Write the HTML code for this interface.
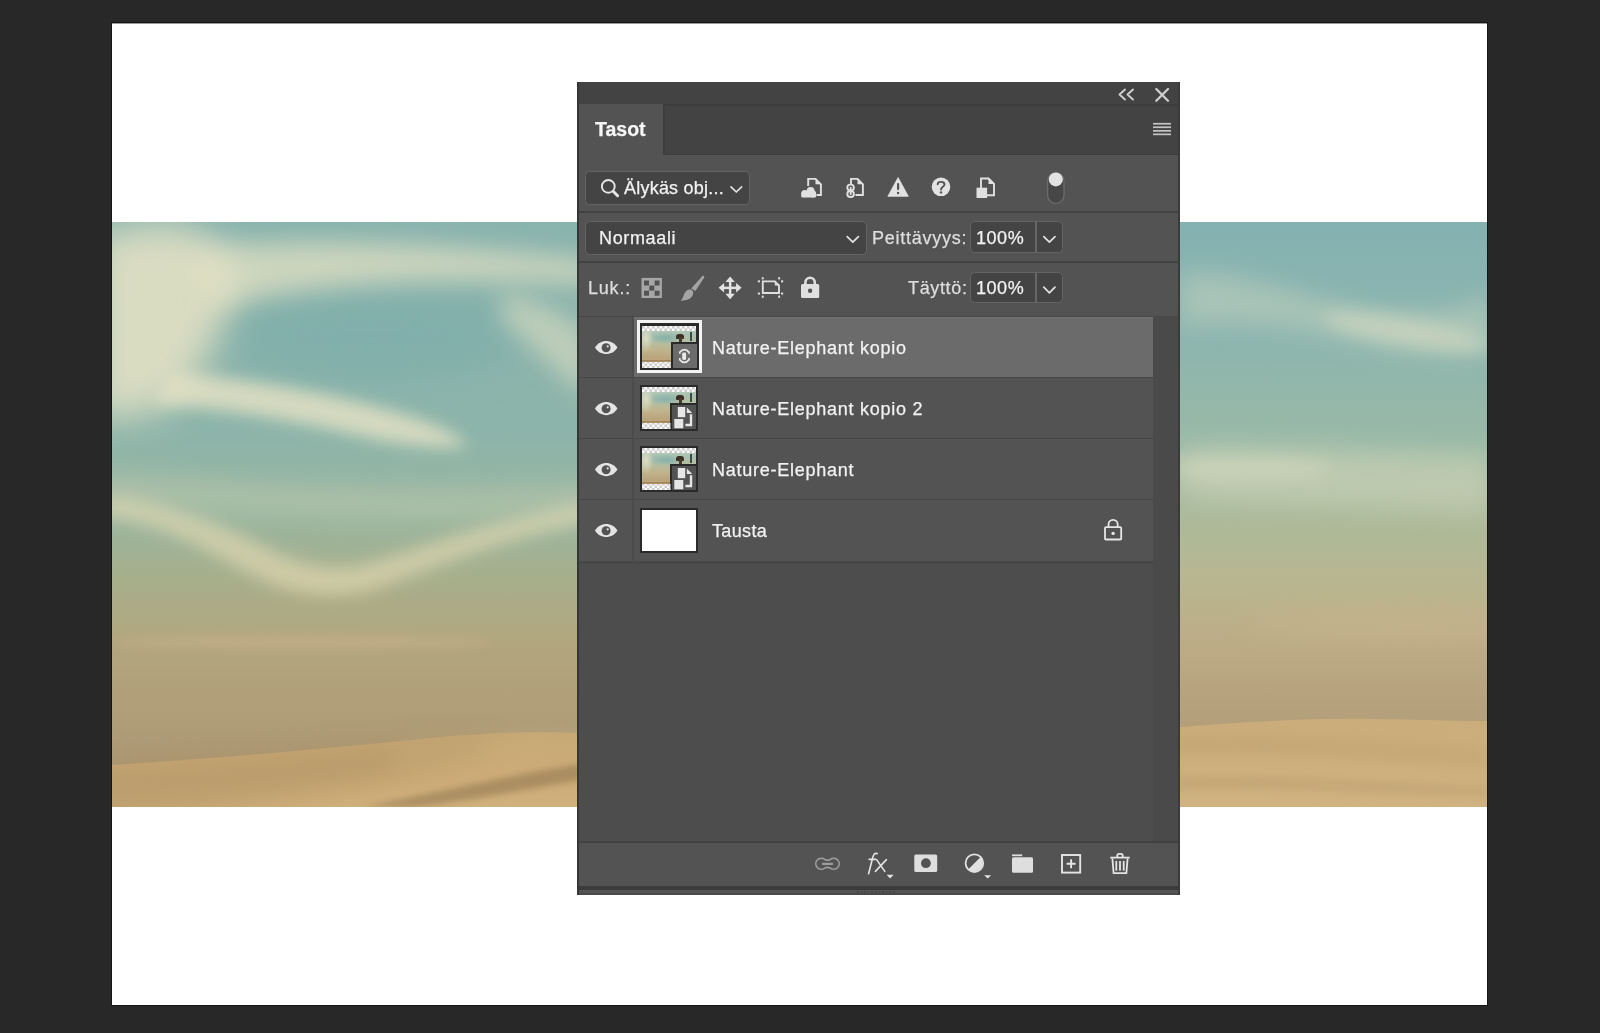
<!DOCTYPE html>
<html><head><meta charset="utf-8">
<style>
*{margin:0;padding:0;box-sizing:border-box}
html,body{width:1600px;height:1033px;overflow:hidden;background:#282828;font-family:"Liberation Sans",sans-serif}
.a{position:absolute}
#canvas{position:absolute;left:111px;top:22px;width:1377px;height:984px;background:#fff;border:1px solid #161616;box-shadow:inset 0 1px 0 #9a9a9a}
#photo{position:absolute;left:112px;top:222px;width:1375px;height:585px;overflow:hidden;background:#a9b49c}
#panel{position:absolute;left:577px;top:82px;width:603px;height:813px;background:#535353;overflow:hidden}
.t{position:absolute;color:#f2f2f2;white-space:nowrap;font-size:18px;line-height:18px;-webkit-text-stroke:0.25px currentColor;will-change:transform}
.fld{position:absolute;background:#444444;border:1.6px solid #646464;border-radius:4.5px}
.sep{position:absolute;left:0;width:603px;height:2px;background:#424242}
svg{position:absolute;overflow:visible}

.th{position:absolute;left:640px;width:58px;height:46px;background:#2a2a2a}
.im{position:absolute;left:2px;top:2px;width:54px;height:42px;overflow:hidden;
 background:
  linear-gradient(180deg,rgba(0,0,0,0) 0,rgba(0,0,0,0) 34px,rgba(120,95,60,.55) 34px,rgba(150,120,80,.35) 36px,rgba(0,0,0,0) 36px),
  radial-gradient(ellipse 8px 14px at 4px 12px,rgba(226,224,196,.9) 0%,rgba(226,224,196,0) 100%),
  radial-gradient(ellipse 20px 6px at 24px 12px,#86b0aa 0%,rgba(134,176,170,0) 100%),
  linear-gradient(180deg,#c4d0bc 0px,#a9c2b2 8px,#b4bfa2 16px,#c0b48c 24px,#b9a47c 32px,#c8a878 36px,#d2b78c 42px)}
.ck{position:absolute;left:0;width:54px;height:5px;background:conic-gradient(#cfcfcf 25%,#fff 0 50%,#cfcfcf 0 75%,#fff 0) 0 0/5px 5px}
.bd{position:absolute;left:30px;top:18px;width:28px;height:28px;background:#2a2a2a}
.bdi{position:absolute;left:2px;top:2px;width:24px;height:24px}
</style></head><body>
<div id="canvas"></div>
<div id="photo"><svg width="1375" height="585" viewBox="0 0 1375 585" style="left:0;top:0">
<defs>
 <linearGradient id="sky" x1="0" y1="0" x2="0" y2="1">
  <stop offset="0" stop-color="#89b3ae"/>
  <stop offset="0.36" stop-color="#8db4aa"/>
  <stop offset="0.5" stop-color="#98b5a0"/>
  <stop offset="0.62" stop-color="#a8ae8a"/>
  <stop offset="0.72" stop-color="#b2a67e"/>
  <stop offset="0.8" stop-color="#b1a07a"/>
  <stop offset="0.9" stop-color="#ad9a76"/>
  <stop offset="1" stop-color="#ab9875"/>
 </linearGradient>
 <linearGradient id="skyR" x1="0" y1="0" x2="0" y2="1">
  <stop offset="0" stop-color="#84b1b1"/>
  <stop offset="0.2" stop-color="#8cb5af"/>
  <stop offset="0.38" stop-color="#9ab9a6"/>
  <stop offset="0.5" stop-color="#abba9b"/>
  <stop offset="0.62" stop-color="#b9b68f"/>
  <stop offset="0.74" stop-color="#bcaa84"/>
  <stop offset="0.84" stop-color="#b4a07b"/>
  <stop offset="1" stop-color="#b19c78"/>
 </linearGradient>
 <linearGradient id="sand" x1="0" y1="0" x2="0" y2="1">
  <stop offset="0" stop-color="#c4a673"/>
  <stop offset="0.5" stop-color="#ccab77"/>
  <stop offset="1" stop-color="#d0b07c"/>
 </linearGradient>
 <filter id="b5" x="-50%" y="-50%" width="200%" height="200%"><feGaussianBlur stdDeviation="5"/></filter>
 <filter id="b8" x="-50%" y="-50%" width="200%" height="200%"><feGaussianBlur stdDeviation="8"/></filter>
 <filter id="b12" x="-50%" y="-50%" width="200%" height="200%"><feGaussianBlur stdDeviation="12"/></filter>
 <filter id="b18" x="-50%" y="-50%" width="200%" height="200%"><feGaussianBlur stdDeviation="18"/></filter>
 <filter id="b3" x="-50%" y="-50%" width="200%" height="200%"><feGaussianBlur stdDeviation="3"/></filter>
</defs>
<rect x="0" y="0" width="700" height="585" fill="url(#sky)"/>
<rect x="700" y="0" width="675" height="585" fill="url(#skyR)"/>
<!-- left: teal hole darker -->
<ellipse cx="260" cy="112" rx="150" ry="48" fill="#7dadab" opacity="0.6" filter="url(#b18)"/>
<!-- left clouds -->
<g fill="#e7e3c5">
 <path d="M-20,10 L60,0 C130,20 130,60 110,100 C95,140 80,170 40,190 L-20,200 Z" opacity="0.85" filter="url(#b18)"/>
 <path d="M80,28 C180,12 330,22 480,38 L480,62 C340,54 200,60 95,88 Z" opacity="0.7" filter="url(#b12)"/>
 <path d="M390,70 C430,80 470,100 480,120 L480,175 C450,160 420,120 390,100 Z" opacity="0.55" filter="url(#b12)"/>
 <path d="M60,150 C150,158 240,175 300,195 C330,205 350,215 355,224 C330,228 280,222 240,212 C170,196 100,185 40,182 Z" opacity="0.8" filter="url(#b8)"/>
 <path d="M-10,270 C40,276 90,293 140,318 C180,340 210,350 250,343 C300,330 360,303 480,278 L480,300 C370,322 310,352 260,368 C210,380 170,370 130,348 C80,320 40,300 -10,296 Z" fill="#e3d9b2" opacity="0.65" filter="url(#b8)"/>
 <path d="M-10,250 C120,262 300,275 480,262 L480,290 C300,305 120,290 -10,280 Z" fill="#cfd0b0" opacity="0.4" filter="url(#b12)"/>
</g>
<ellipse cx="190" cy="420" rx="190" ry="7" fill="#c9b08d" opacity="0.55" filter="url(#b5)"/>
<!-- right clouds -->
<g fill="#e3e1c5">
 <path d="M1068,50 C1110,48 1150,60 1200,74 C1240,86 1280,94 1320,90 C1350,87 1370,80 1380,70 L1380,128 C1340,134 1290,130 1240,118 C1180,104 1120,98 1068,104 Z" opacity="0.35" filter="url(#b12)"/>
 <ellipse cx="1295" cy="110" rx="85" ry="14" transform="rotate(10 1295 110)" opacity="0.45" filter="url(#b8)"/>
 <path d="M1068,226 C1150,222 1260,230 1380,232 L1380,290 C1260,284 1150,284 1068,276 Z" opacity="0.4" filter="url(#b12)"/>
 <ellipse cx="1130" cy="246" rx="90" ry="12" opacity="0.35" filter="url(#b8)"/>
</g>
<ellipse cx="1300" cy="402" rx="170" ry="15" fill="#d1b690" opacity="0.4" filter="url(#b12)"/>
<!-- sand left -->
<path d="M0,543 C100,537 220,526 339,514 C400,509 440,510 470,511 L470,585 L0,585 Z" fill="url(#sand)"/>
<path d="M-20,540 C120,534 220,526 340,516 L400,520 C300,560 150,585 -20,600 Z" fill="#a88b60" opacity="0.45" filter="url(#b12)"/>
<path d="M280,526 C360,516 420,514 480,514 L480,532 C420,534 360,538 280,546 Z" fill="#d6bb8a" opacity="0.3" filter="url(#b12)"/>
<path d="M250,585 C330,570 400,552 470,542 L470,558 C410,568 350,580 300,585 Z" fill="#8f7450" opacity="0.55" filter="url(#b3)"/>
<!-- sand right -->
<linearGradient id="sandR" x1="0" y1="0" x2="0" y2="1"><stop offset="0" stop-color="#cbad7b"/><stop offset="1" stop-color="#d1b382"/></linearGradient>
<path d="M1060,506 C1130,500 1200,496 1260,497 C1320,498 1350,499 1375,499 L1375,585 L1060,585 Z" fill="url(#sandR)"/>
<path d="M1060,515 C1150,512 1260,518 1375,528 L1375,545 C1260,535 1150,530 1060,532 Z" fill="#b09366" opacity="0.3" filter="url(#b8)"/>
<path d="M1060,555 C1150,552 1260,558 1375,565 L1375,575 C1260,570 1150,566 1060,568 Z" fill="#ad9064" opacity="0.3" filter="url(#b5)"/>
</svg></div>
<div id="panel">
  <!-- title bar + tab row -->
  <div class="a" style="left:0;top:0;width:603px;height:73px;background:#434343"></div>
  <div class="a" style="left:1px;top:22px;width:85px;height:51px;background:#535353"></div>
  <div class="a" style="left:86px;top:22px;width:517px;height:1.5px;background:#3d3d3d"></div>
  <div class="a" style="left:86px;top:22px;width:1.5px;height:51px;background:#3d3d3d"></div>
  <div class="a" style="left:86px;top:71.5px;width:517px;height:1.5px;background:#3e3e3e"></div>
  <div class="t" style="left:18px;top:37.5px;font-size:19.5px;line-height:19.5px;font-weight:bold;color:#f6f6f6">Tasot</div>
  <!-- filter row -->
  <div class="fld" style="left:7.5px;top:88.5px;width:165px;height:34px"></div>
  <div class="t" style="left:47px;top:97px;letter-spacing:0.22px">Älykäs obj...</div>
  <div class="sep" style="top:129px"></div>
  <!-- blend row -->
  <div class="fld" style="left:7.5px;top:138.5px;width:282px;height:34px"></div>
  <div class="t" style="left:22px;top:147px;letter-spacing:0.65px">Normaali</div>
  <div class="t" style="left:294.5px;top:147px;letter-spacing:0.75px;color:#dedede">Peittävyys:</div>
  <div class="fld" style="left:392.5px;top:138.8px;width:93.8px;height:32.4px"></div>
  <div class="a" style="left:458px;top:140px;width:2px;height:30px;background:#666"></div>
  <div class="t" style="left:399px;top:147px;letter-spacing:0.55px">100%</div>
  <div class="sep" style="top:179px"></div>
  <!-- lock row -->
  <div class="t" style="left:11px;top:197px;letter-spacing:0.8px;color:#dedede">Luk.:</div>
  <div class="t" style="left:330.5px;top:197px;letter-spacing:0.65px;color:#dedede">Täyttö:</div>
  <div class="fld" style="left:392.5px;top:189.6px;width:93.8px;height:31px"></div>
  <div class="a" style="left:458px;top:191px;width:2px;height:29px;background:#666"></div>
  <div class="t" style="left:399px;top:197px;letter-spacing:0.55px">100%</div>
  <!-- layers list -->
  <div class="a" style="left:0;top:234px;width:603px;height:525px;background:#4d4d4d"></div>
  <div class="a" style="left:576px;top:234px;width:27px;height:525px;background:#4a4a4a"></div>
  <div class="a" style="left:0;top:234px;width:576px;height:248px;background:#474747"></div>
  <div class="a" style="left:1px;top:235px;width:575px;height:60px;background:#535353"></div>
  <div class="a" style="left:56.5px;top:235px;width:519.5px;height:60px;background:#6b6b6b"></div>
  <div class="a" style="left:56.5px;top:235px;width:519.5px;height:1px;background:#737373"></div>
  <div class="a" style="left:1px;top:296px;width:575px;height:60px;background:#535353"></div>
  <div class="a" style="left:1px;top:357px;width:575px;height:60px;background:#535353"></div>
  <div class="a" style="left:1px;top:418px;width:575px;height:61px;background:#535353"></div>
  <div class="a" style="left:55px;top:235px;width:1.5px;height:245px;background:#4b4b4b"></div>
  <div class="t" style="left:135px;top:257px;letter-spacing:0.75px">Nature-Elephant kopio</div>
  <div class="t" style="left:135px;top:318px;letter-spacing:0.75px">Nature-Elephant kopio 2</div>
  <div class="t" style="left:135px;top:379px;letter-spacing:0.75px">Nature-Elephant</div>
  <div class="t" style="left:135px;top:440px;letter-spacing:0.35px">Tausta</div>
  <!-- footer -->
  <div class="sep" style="top:759px"></div>
  <div class="a" style="left:0;top:804px;width:603px;height:4px;background:#3b3b3b"></div>
  <div class="a" style="left:0;top:811px;width:603px;height:2px;background:#4a4a4a"></div>
  <div class="a" style="left:280.0px;top:808.5px;width:1.6px;height:4px;background:#484848"></div><div class="a" style="left:283.6px;top:808.5px;width:1.6px;height:4px;background:#484848"></div><div class="a" style="left:287.2px;top:808.5px;width:1.6px;height:4px;background:#484848"></div><div class="a" style="left:290.8px;top:808.5px;width:1.6px;height:4px;background:#484848"></div><div class="a" style="left:294.4px;top:808.5px;width:1.6px;height:4px;background:#484848"></div><div class="a" style="left:298.0px;top:808.5px;width:1.6px;height:4px;background:#484848"></div><div class="a" style="left:301.6px;top:808.5px;width:1.6px;height:4px;background:#484848"></div><div class="a" style="left:305.2px;top:808.5px;width:1.6px;height:4px;background:#484848"></div><div class="a" style="left:308.8px;top:808.5px;width:1.6px;height:4px;background:#484848"></div><div class="a" style="left:312.4px;top:808.5px;width:1.6px;height:4px;background:#484848"></div><div class="a" style="left:316.0px;top:808.5px;width:1.6px;height:4px;background:#484848"></div>
  <!-- panel borders -->
  <div class="a" style="left:0;top:0;width:2px;height:813px;background:#363636"></div>
  <div class="a" style="left:601px;top:0;width:2px;height:813px;background:#3b3b3b"></div>
</div>

<div class="a" style="left:637px;top:320px;width:65px;height:53px;background:#f4f4f4"></div><div class="th" style="top:323px;height:47px;left:639.5px;width:59.5px;"><div class="im" style="left:2.5px;top:3px;">
<div class="a" style="left:34px;top:8px;width:8px;height:5px;background:#3a2e22;border-radius:3px 3px 1px 1px"></div><div class="a" style="left:37px;top:11px;width:3px;height:5px;background:#4a3a2a"></div><div class="a" style="left:48px;top:6px;width:2px;height:9px;background:#3c4a48"></div></div>
<div class="bd" style="left:31px;top:19px;"><div class="bdi" style="background:#6b6b6b"></div></div></div><div class="th" style="top:385px;height:46px;"><div class="im" style="">
<div class="a" style="left:34px;top:8px;width:8px;height:5px;background:#3a2e22;border-radius:3px 3px 1px 1px"></div><div class="a" style="left:37px;top:11px;width:3px;height:5px;background:#4a3a2a"></div><div class="a" style="left:48px;top:6px;width:2px;height:9px;background:#3c4a48"></div></div>
<div class="bd" style=""><div class="bdi" style="background:#535353"></div></div></div><div class="th" style="top:446px;height:46px;"><div class="im" style="">
<div class="a" style="left:34px;top:8px;width:8px;height:5px;background:#3a2e22;border-radius:3px 3px 1px 1px"></div><div class="a" style="left:37px;top:11px;width:3px;height:5px;background:#4a3a2a"></div><div class="a" style="left:48px;top:6px;width:2px;height:9px;background:#3c4a48"></div></div>
<div class="bd" style=""><div class="bdi" style="background:#535353"></div></div></div><div class="th" style="top:507.5px;height:45px"><div class="a" style="left:2px;top:2px;width:54px;height:41px;background:#fff"></div></div>
<svg width="1600" height="1033" viewBox="0 0 1600 1033" style="left:0;top:0">
<defs><pattern id="ckp0" width="5" height="5" patternUnits="userSpaceOnUse" x="642" y="326"><rect width="5" height="5" fill="#fafafa"/><rect width="2.5" height="2.5" fill="#cdcdcd"/><rect x="2.5" y="2.5" width="2.5" height="2.5" fill="#cdcdcd"/></pattern><pattern id="ckp1" width="5" height="5" patternUnits="userSpaceOnUse" x="642" y="387"><rect width="5" height="5" fill="#fafafa"/><rect width="2.5" height="2.5" fill="#cdcdcd"/><rect x="2.5" y="2.5" width="2.5" height="2.5" fill="#cdcdcd"/></pattern><pattern id="ckp2" width="5" height="5" patternUnits="userSpaceOnUse" x="642" y="448"><rect width="5" height="5" fill="#fafafa"/><rect width="2.5" height="2.5" fill="#cdcdcd"/><rect x="2.5" y="2.5" width="2.5" height="2.5" fill="#cdcdcd"/></pattern></defs>
<rect x="642" y="326" width="54" height="5" fill="url(#ckp0)"/><rect x="642" y="362" width="28.5" height="6" fill="url(#ckp0)"/><rect x="642" y="387" width="54" height="5" fill="url(#ckp1)"/><rect x="642" y="423" width="28.5" height="6" fill="url(#ckp1)"/><rect x="642" y="448" width="54" height="5" fill="url(#ckp2)"/><rect x="642" y="484" width="28.5" height="6" fill="url(#ckp2)"/>

 <g fill="none" stroke="#cfcfcf" stroke-width="1.9" stroke-linecap="round" stroke-linejoin="round">
  <!-- << -->
  <path d="M1125,89.5 L1119.5,94.5 L1125,99.5 M1133,89.5 L1127.5,94.5 L1133,99.5"/>
  <!-- x -->
  <path d="M1156.3,89 L1168,100.7 M1168,89 L1156.3,100.7" stroke-width="2.3"/>
 </g>
 <!-- hamburger -->
 <g fill="#c4c4c4">
  <rect x="1153" y="122.9" width="18" height="1.7"/>
  <rect x="1153" y="126.4" width="18" height="1.7"/>
  <rect x="1153" y="130" width="18" height="1.7"/>
  <rect x="1153" y="133.5" width="18" height="1.7"/>
 </g>
 <!-- magnifier -->
 <g fill="none" stroke="#e6e6e6" stroke-linecap="round">
  <circle cx="608.3" cy="186.4" r="6.4" stroke-width="1.9"/>
  <path d="M613.2,191.3 L617.6,195.7" stroke-width="3"/>
 </g>
 <!-- chevrons -->
 <g fill="none" stroke="#e2e2e2" stroke-width="1.7" stroke-linecap="round" stroke-linejoin="round">
  <path d="M731,186.8 L736.3,192 L741.6,186.8"/>
  <path d="M847.2,236.6 L852.8,242.2 L858.4,236.6"/>
  <path d="M1043.8,236.6 L1049.4,242.2 L1055,236.6"/>
  <path d="M1043.8,287.2 L1049.4,292.8 L1055,287.2"/>
 </g>
 <!-- cloud doc -->
 <g fill="none" stroke="#e0e0e0" stroke-width="1.9" stroke-linejoin="miter">
  <path d="M808.2,186 V178.9 H815.5 L820.9,184.3 V195 H816.5"/>
 </g>
 <path d="M815.5,178 V184.3 H821.5 Z" fill="#e0e0e0"/>
 <g fill="#e0e0e0">
  <circle cx="810.6" cy="191" r="3.9"/>
  <circle cx="804.8" cy="193.6" r="3.6"/>
  <circle cx="812.8" cy="194" r="3.4"/>
  <rect x="801.2" y="193.8" width="15" height="3.8" rx="1.5"/>
 </g>
 <!-- link doc -->
 <g fill="none" stroke="#e0e0e0" stroke-width="1.9">
  <path d="M851,184 V178.9 H857.5 L862.9,184.3 V195 H855.5"/>
  <rect x="847.3" y="184.6" width="6.6" height="6" rx="3"/>
  <rect x="847.3" y="191" width="6.6" height="6" rx="3"/>
 </g>
 <path d="M857.5,178 V184.3 H863.5 Z" fill="#e0e0e0"/>
 <rect x="849.8" y="187" width="1.8" height="8" fill="#e0e0e0"/>
 <!-- warning -->
 <path d="M898.1,177.6 L908.3,196.3 L887.9,196.3 Z" fill="#e2e2e2" stroke="#e2e2e2" stroke-width="0.8" stroke-linejoin="round"/>
 <rect x="897" y="183" width="2.2" height="7" rx="1" fill="#535353"/>
 <circle cx="898.1" cy="193" r="1.2" fill="#535353"/>
 <!-- question -->
 <circle cx="941" cy="186.8" r="9.3" fill="#e2e2e2"/>
 <path d="M937.7,184.2 C937.7,181.2 944.5,181 944.5,184.4 C944.5,186.8 941,186.6 941,189.6" fill="none" stroke="#535353" stroke-width="1.9" stroke-linecap="round"/>
 <circle cx="941" cy="192.4" r="1.2" fill="#535353"/>
 <!-- doc square -->
 <g fill="none" stroke="#e0e0e0" stroke-width="1.9">
  <path d="M981,188 V178.5 H988.5 L994,184 V195.3 H987"/>
 </g>
 <path d="M988.5,177.6 V184 H994.8 Z" fill="#e0e0e0"/>
 <rect x="976.5" y="187.7" width="10.6" height="10.3" fill="#e0e0e0"/>
 <!-- toggle -->
 <rect x="1047.6" y="172.6" width="16.4" height="30.8" rx="8.2" fill="#474747" stroke="#6a6a6a" stroke-width="1.4"/>
 <circle cx="1055.8" cy="179.4" r="7" fill="#e2e2e2"/>
 <!-- checker -->
 <rect x="642.5" y="278.9" width="18.4" height="18.1" fill="#a6a6a6" stroke="#a6a6a6" stroke-width="2"/>
 <g fill="#535353">
  <rect x="644" y="280.5" width="5" height="5"/><rect x="654.6" y="280.5" width="5" height="5"/>
  <rect x="649.3" y="285.6" width="5" height="5"/>
  <rect x="644" y="290.7" width="5" height="5"/><rect x="654.6" y="290.7" width="5" height="5"/>
 </g>
 <!-- brush -->
 <path d="M702.2,276.2 C703.2,275.4 704.4,276 704.2,277.4 L695.4,291 L691.2,288.4 Z" fill="#a4a4a4"/>
 <path d="M689.6,289.6 C692.6,289.4 693.6,292 693,294.6 C692,298.4 687.4,300.8 680.6,300.8 C683,299 683.2,295.6 685,292.6 C686.2,290.6 688,289.6 689.6,289.6 Z" fill="#a4a4a4"/>
 <!-- move -->
 <g fill="#e2e2e2">
  <path d="M730.1,276.4 L734.8,281.9 H725.4 Z"/>
  <path d="M730.1,299.2 L734.8,293.7 H725.4 Z"/>
  <path d="M718.6,287.8 L724.1,283 V292.6 Z"/>
  <path d="M741.6,287.8 L736.1,283 V292.6 Z"/>
  <rect x="728.9" y="281" width="2.5" height="13.5"/>
  <rect x="723" y="286.6" width="14.5" height="2.5"/>
 </g>
 <!-- artboard -->
 <path d="M762.8,281.4 H774.8 L779,285.6 V293 H762.8 Z" fill="none" stroke="#e0e0e0" stroke-width="1.9"/>
 <path d="M774.8,280.4 V285.6 H780 Z" fill="#e0e0e0"/>
 <g fill="#e0e0e0">
  <rect x="757.8" y="280.4" width="2.2" height="1.9"/><rect x="781" y="280.4" width="2.2" height="1.9"/>
  <rect x="757.8" y="292.6" width="2.2" height="1.9"/><rect x="781" y="292.6" width="2.2" height="1.9"/>
  <rect x="761.8" y="277.2" width="1.9" height="2.2"/><rect x="778.2" y="277.2" width="1.9" height="2.2"/>
  <rect x="761.8" y="295.6" width="1.9" height="2.2"/><rect x="778.2" y="295.6" width="1.9" height="2.2"/>
 </g>
 <!-- lock filled -->
 <path d="M805.4,285 V282.4 A4.7,4.7 0 0 1 814.8,282.4 V285" fill="none" stroke="#e0e0e0" stroke-width="2.6"/>
 <rect x="801" y="284" width="18.2" height="14" rx="1.5" fill="#e0e0e0"/>
 <circle cx="810.1" cy="290.8" r="2.2" fill="#535353"/>
<path d="M595,347.6 C599.8,338.9 612.6,338.9 617.4,347.6 C612.6,356.3 599.8,356.3 595,347.6 Z" fill="#e4e4e4"/>
<circle cx="606.1" cy="347.8" r="4.5" fill="#535353"/><circle cx="607.7" cy="346.3" r="1.1" fill="#e4e4e4"/>
<path d="M595,408.6 C599.8,399.9 612.6,399.9 617.4,408.6 C612.6,417.3 599.8,417.3 595,408.6 Z" fill="#e4e4e4"/>
<circle cx="606.1" cy="408.8" r="4.5" fill="#535353"/><circle cx="607.7" cy="407.3" r="1.1" fill="#e4e4e4"/>
<path d="M595,469.6 C599.8,460.9 612.6,460.9 617.4,469.6 C612.6,478.3 599.8,478.3 595,469.6 Z" fill="#e4e4e4"/>
<circle cx="606.1" cy="469.8" r="4.5" fill="#535353"/><circle cx="607.7" cy="468.3" r="1.1" fill="#e4e4e4"/>
<path d="M595,530.6 C599.8,521.9 612.6,521.9 617.4,530.6 C612.6,539.3 599.8,539.3 595,530.6 Z" fill="#e4e4e4"/>
<circle cx="606.1" cy="530.8000000000001" r="4.5" fill="#535353"/><circle cx="607.7" cy="529.3000000000001" r="1.1" fill="#e4e4e4"/>
<g fill="none" stroke="#e8e8e8" stroke-width="1.8">
 <path d="M680.2,352 A5,5 0 0 1 688.6,352"/><path d="M680.2,360 A5,5 0 0 0 688.6,360"/>
 <path d="M679.8,351.5 V353.8 M689,351.5 V353.8 M679.8,358 V360.4 M689,358 V360.4" stroke-width="1.7"/>
</g>
<rect x="682.2" y="352.6" width="3.9" height="7.4" rx="1.4" fill="#e8e8e8"/>
<g fill="#e6e6e6">
 <path d="M677.8,407 H685.2 V417.2 H677.8 Z"/>
 <path d="M686.8,407.4 L692.2,413 H686.8 Z"/>
 <path d="M689.8,414.2 H692.2 V426.2 H685.4 V423.8 H689.8 Z"/>
 <rect x="674.3" y="419" width="9" height="9.3"/>
</g>
<g fill="#e6e6e6">
 <path d="M677.8,468 H685.2 V478.2 H677.8 Z"/>
 <path d="M686.8,468.4 L692.2,474 H686.8 Z"/>
 <path d="M689.8,475.2 H692.2 V487.2 H685.4 V484.8 H689.8 Z"/>
 <rect x="674.3" y="480" width="9" height="9.3"/>
</g>
<g fill="none" stroke="#e6e6e6" stroke-width="1.8">
 <path d="M1108.5,527 V524.5 A4.6,4.6 0 0 1 1117.7,524.5 V527"/>
 <rect x="1105" y="527.2" width="16.2" height="12.3" rx="1"/>
</g><circle cx="1113.1" cy="533.4" r="1.7" fill="#e6e6e6"/>

<path d="M824.7,859.4 A5.5,5.5 0 1 0 824.7,868.1 Q827.5,866.6 830.3,868.1 A5.5,5.5 0 1 0 830.3,859.4 Q827.5,860.9 824.7,859.4 Z" fill="none" stroke="#9c9c9c" stroke-width="1.7"/>
<rect x="821.8" y="862.7" width="11.4" height="2.2" rx="1" fill="#9c9c9c"/>
<g fill="none" stroke="#e4e4e4" stroke-width="1.6" stroke-linecap="round">
 <path d="M877.2,853.6 C874.6,852.8 873.4,854.6 872.6,858 L868.6,873.8"/>
 <path d="M869.2,859.4 H875.4"/>
 <path d="M876.6,859.6 L884.8,871.4 M886.4,859.6 L875.4,871.4"/>
</g>
<path d="M886.6,874.7 H893.6 L890.1,878.4 Z" fill="#e4e4e4"/>
<rect x="914.3" y="854.5" width="22.9" height="17.4" rx="1.5" fill="#dedede"/>
<circle cx="925.9" cy="863.2" r="4.9" fill="#535353"/>
<circle cx="974.4" cy="863.2" r="8.8" fill="none" stroke="#e2e2e2" stroke-width="1.8"/>
<path d="M980.6,857 A8.8,8.8 0 0 1 968.2,869.4 Z" fill="#e2e2e2"/>
<path d="M984.2,875.2 H991.2 L987.7,878.4 Z" fill="#e4e4e4"/>
<rect x="1012" y="854.4" width="10.2" height="1.8" fill="#dedede"/>
<rect x="1012" y="857.3" width="21" height="15.5" rx="1.5" fill="#dedede"/>
<rect x="1062" y="855" width="18.2" height="17.6" fill="none" stroke="#e4e4e4" stroke-width="1.9"/>
<path d="M1071.1,859.3 V868.3 M1066.6,863.8 H1075.6" stroke="#e4e4e4" stroke-width="1.9"/>
<g fill="none" stroke="#e4e4e4" stroke-width="1.8">
 <path d="M1110.3,857.6 H1129.7"/>
 <path d="M1117.3,857 V855.5 Q1117.3,853.8 1119,853.8 H1121 Q1122.7,853.8 1122.7,855.5 V857"/>
 <path d="M1112.4,858.5 L1113.6,873.2 H1126.4 L1127.6,858.5"/>
</g>
<g fill="#e4e4e4"><rect x="1115.4" y="861" width="1.8" height="9.6"/><rect x="1119.1" y="861" width="1.8" height="9.6"/><rect x="1122.8" y="861" width="1.8" height="9.6"/></g>

</svg>
</body></html>
